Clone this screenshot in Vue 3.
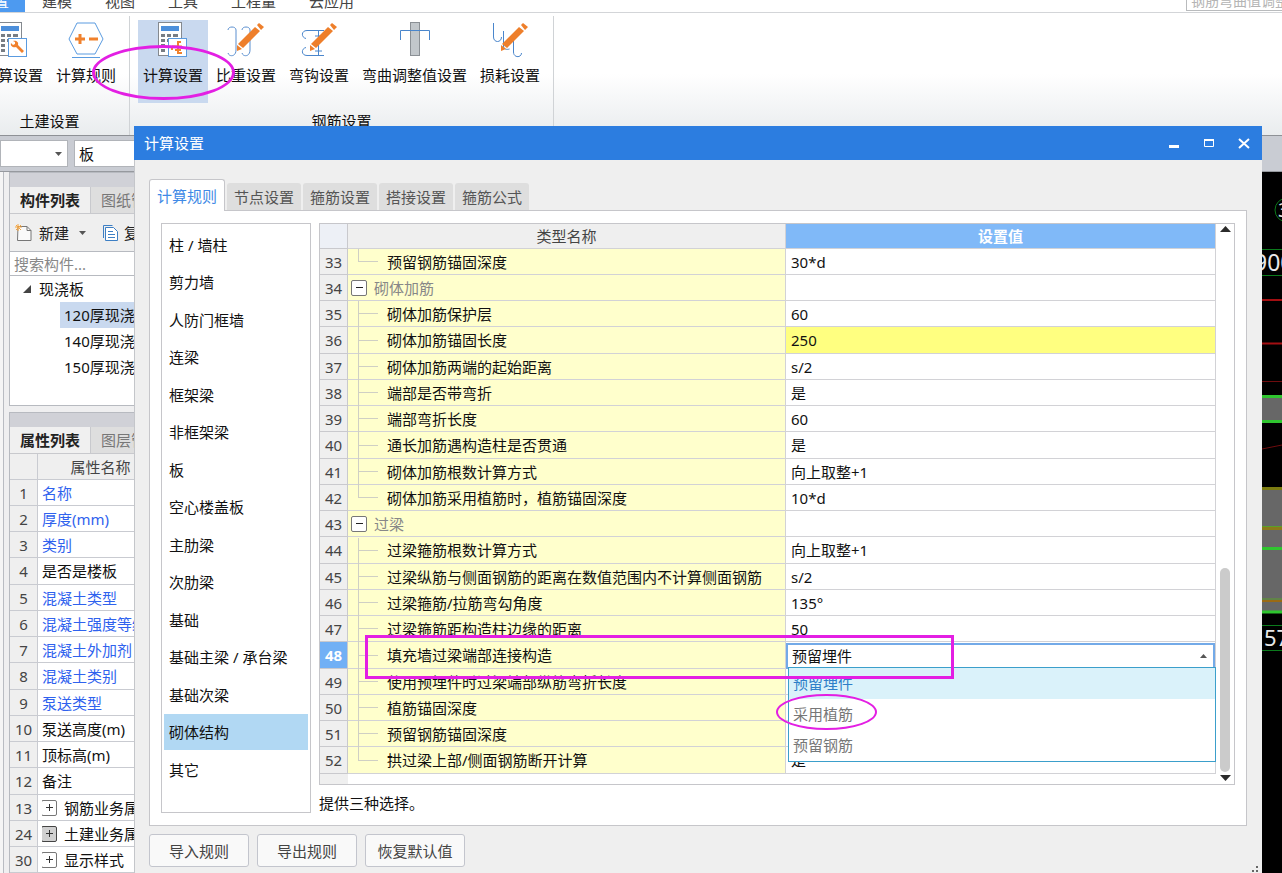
<script setup>
import { ref } from 'vue'

const menus = ['工程设置', '建模', '视图', '工具', '工程量', '云应用']

const groups = [
  {
    title: '土建设置',
    items: [
      { label: '计算设置', icon: 'calcWrench' },
      { label: '计算规则', icon: 'hexagon' },
    ],
  },
  {
    title: '钢筋设置',
    items: [
      { label: '计算设置', icon: 'calcRebar', active: true },
      { label: '比重设置', icon: 'weight' },
      { label: '弯钩设置', icon: 'hook' },
      { label: '弯曲调整值设置', icon: 'bend' },
      { label: '损耗设置', icon: 'loss' },
    ],
  },
]

const components = ['120厚现浇板', '140厚现浇板', '150厚现浇板']

const properties = [
  { no: 1, name: '名称', blue: true },
  { no: 2, name: '厚度(mm)', blue: true },
  { no: 3, name: '类别', blue: true },
  { no: 4, name: '是否是楼板' },
  { no: 5, name: '混凝土类型', blue: true },
  { no: 6, name: '混凝土强度等级', blue: true },
  { no: 7, name: '混凝土外加剂', blue: true },
  { no: 8, name: '混凝土类别', blue: true },
  { no: 9, name: '泵送类型', blue: true },
  { no: 10, name: '泵送高度(m)' },
  { no: 11, name: '顶标高(m)' },
  { no: 12, name: '备注' },
  { no: 13, name: '钢筋业务属性', group: true },
  { no: 24, name: '土建业务属性', group: true, dark: true },
  { no: 30, name: '显示样式', group: true },
]

const tabs = ['计算规则', '节点设置', '箍筋设置', '搭接设置', '箍筋公式']
const activeTab = ref('计算规则')

const categories = [
  '柱 / 墙柱', '剪力墙', '人防门框墙', '连梁', '框架梁', '非框架梁', '板', '空心楼盖板',
  '主肋梁', '次肋梁', '基础', '基础主梁 / 承台梁', '基础次梁', '砌体结构', '其它',
]
const activeCategory = ref('砌体结构')

const rules = [
  { no: 33, name: '预留钢筋锚固深度', value: '30*d', last: true },
  { no: 34, name: '砌体加筋', group: true },
  { no: 35, name: '砌体加筋保护层', value: '60' },
  { no: 36, name: '砌体加筋锚固长度', value: '250', changed: true },
  { no: 37, name: '砌体加筋两端的起始距离', value: 's/2' },
  { no: 38, name: '端部是否带弯折', value: '是' },
  { no: 39, name: '端部弯折长度', value: '60' },
  { no: 40, name: '通长加筋遇构造柱是否贯通', value: '是' },
  { no: 41, name: '砌体加筋根数计算方式', value: '向上取整+1' },
  { no: 42, name: '砌体加筋采用植筋时，植筋锚固深度', value: '10*d', last: true },
  { no: 43, name: '过梁', group: true },
  { no: 44, name: '过梁箍筋根数计算方式', value: '向上取整+1' },
  { no: 45, name: '过梁纵筋与侧面钢筋的距离在数值范围内不计算侧面钢筋', value: 's/2' },
  { no: 46, name: '过梁箍筋/拉筋弯勾角度', value: '135°' },
  { no: 47, name: '过梁箍筋距构造柱边缘的距离', value: '50' },
  { no: 48, name: '填充墙过梁端部连接构造', editing: true },
  { no: 49, name: '使用预埋件时过梁端部纵筋弯折长度', value: '' },
  { no: 50, name: '植筋锚固深度', value: '' },
  { no: 51, name: '预留钢筋锚固深度', value: '' },
  { no: 52, name: '拱过梁上部/侧面钢筋断开计算', value: '是', last: true },
]

const options = ['预留埋件', '采用植筋', '预留钢筋']
const selected = ref('预留埋件')
</script>

<template>
  <div class="app">
    <nav class="menu">
      <button v-for="(m, i) in menus" :key="m" type="button" :class="{ current: i === 0 }">{{ m }}</button>
      <input class="menu-search" type="text" aria-label="搜索" placeholder="钢筋弯曲值调整" />
    </nav>

    <header class="ribbon">
      <section v-for="g in groups" :key="g.title" class="group">
        <div class="tools">
          <button v-for="t in g.items" :key="t.icon" type="button" class="tool" :class="{ active: t.active }">
            <svg width="40" height="40" viewBox="0 0 40 40" fill="none" aria-hidden="true">
              <g v-if="t.icon === 'calcWrench' || t.icon === 'calcRebar'">
                <rect x="5.500" y="2.500" width="23" height="33" fill="#fff" stroke="#84898f" />
                <rect x="8" y="6" width="18" height="5" fill="#4c8fdb" />
                <path d="M8 15.500h4M14 15.500h4M20 15.500h5M8 20.500h4M14 20.500h4M8 25.500h4M8 30.500h4" stroke="#777d84" stroke-width="3" />
                <rect x="15.500" y="18.500" width="18" height="18" fill="#fff" stroke="#5a9be0" />
                <path v-if="t.icon === 'calcWrench'" d="M18 23l2 2 2-1 0-2-2-1c3-1 6 1 5 4l6 6-2 2-6-6c-3 1-6-1-5-4z" fill="#f0812d" />
                <path v-else d="M28 22h-3v11h4M19 26.500h10M19 26v4M22 30h6" stroke="#f0812d" stroke-width="2" />
              </g>
              <g v-else-if="t.icon === 'hexagon'">
                <path d="M11 3h18l8 16-8 15H11L3 19z" fill="#fff" stroke="#5a9be0" />
                <path d="M6 37.500h28" stroke="#5a9be0" />
                <path d="M9 19h10M14 14v10M23 19h9" stroke="#f0812d" stroke-width="3" />
              </g>
              <g v-else-if="t.icon === 'weight'" stroke="#5a8fd0">
                <path d="M2 10c0-4 8-4 8 0v20c0 7-7 7-8 3M16 10c0-4 8-4 8 0v20c0 7-7 7-8 3" />
              </g>
              <g v-else-if="t.icon === 'hook'" stroke="#4a86cc">
                <path d="M25 10.500H8c-6 0-6 7-1 8M25 35.500H8c-6 0-6-7-1-8M19.500 11v24M16 16h7M16 31h7" />
              </g>
              <g v-else-if="t.icon === 'bend'">
                <rect x="15.500" y="2.500" width="9" height="33" fill="#c2c7cb" stroke="#8b9095" />
                <path d="M5.500 20v-9.500h29V20" stroke="#4a86cc" />
              </g>
              <g v-else stroke="#4a86cc">
                <path d="M3.500 3v14c0 6 8 6 8 0M13.500 11v15c0 3 3 4 6 3M23.500 18v14c0 6 8 6 8 1" />
              </g>
              <path
                v-if="['weight', 'hook', 'loss'].includes(t.icon)"
                d="M31 5l2-2 5 4-3 3zM29 7l5 4-17 17-5-4zM11 25l5 4-5 2z"
                fill="#ee7f2b"
              />
            </svg>
            <span>{{ t.label }}</span>
          </button>
        </div>
        <h2>{{ g.title }}</h2>
      </section>
    </header>

    <div class="filters">
      <select class="floor" aria-label="楼层"><option></option></select>
      <svg class="floor-arrow" width="7" height="4" aria-hidden="true"><path d="M0 0h7L3.500 4z" fill="#555" /></svg>
      <select class="kind" aria-label="构件类型"><option>板</option></select>
    </div>

    <main class="workspace">
      <div class="rail"></div>
      <div class="side">
        <section class="panel tree-panel">
          <div class="band"></div>
          <div class="panel-tabs">
            <button type="button" class="on">构件列表</button>
            <button type="button">图纸管理</button>
          </div>
          <div class="panel-tools">
            <button type="button">
              <svg width="18" height="18" viewBox="0 0 18 18" fill="none" aria-hidden="true">
                <path d="M3 2.500h9l4 4v10H2.500z" fill="#fafafa" stroke="#777" />
                <path d="M12 2.500v4h4" stroke="#777" />
                <path d="M3 0v7M0 3h7M1 1l5 5M6 1L1 6" stroke="#f5a540" />
              </svg>
              新建
              <svg class="caret" width="7" height="4" aria-hidden="true"><path d="M0 0h7L3.500 4z" fill="#555" /></svg>
            </button>
            <button type="button">
              <svg width="16" height="18" viewBox="0 0 16 18" fill="none" aria-hidden="true">
                <path d="M1.500 14V1.500h9" stroke="#3d7fc4" />
                <path d="M3.500 3.500h8l4 4v9h-12z" fill="#fff" stroke="#3d7fc4" />
                <path d="M6 7.500h5M6 10.500h7M6 13.500h7" stroke="#3d7fc4" stroke-width="1" />
              </svg>
              复制
            </button>
          </div>
          <input class="find" type="text" aria-label="搜索构件" placeholder="搜索构件..." />
          <div class="tree">
            <div class="root">
              <svg width="8" height="8" aria-hidden="true"><path d="M8 0v8H0z" fill="#444" /></svg>
              现浇板
            </div>
            <ul>
              <li v-for="(c, i) in components" :key="c" :class="{ picked: i === 0 }">{{ c }}</li>
            </ul>
          </div>
        </section>

        <section class="panel">
          <div class="band"></div>
          <div class="panel-tabs">
            <button type="button" class="on">属性列表</button>
            <button type="button">图层管理</button>
          </div>
          <table class="props">
            <colgroup><col class="c-no" /><col class="c-prop" /><col /></colgroup>
            <thead>
              <tr><th></th><th>属性名称</th><th></th></tr>
            </thead>
            <tbody>
              <tr v-for="p in properties" :key="p.no">
                <th scope="row">{{ p.no }}</th>
                <td :class="{ blue: p.blue }">
                  <div class="prop">
                    <button v-if="p.group" type="button" class="box" :class="{ dark: p.dark }" aria-label="展开">
                      <svg width="7" height="7" aria-hidden="true"><path d="M0 3.500h7M3.500 0v7" stroke="#333" /></svg>
                    </button>
                    {{ p.name }}
                  </div>
                </td>
                <td></td>
              </tr>
            </tbody>
          </table>
        </section>
      </div>

      <div class="canvas">
        <svg width="20" height="701" viewBox="1262 172 20 701" fill="none" aria-hidden="true">
          <circle cx="1287" cy="210" r="12" stroke="#0b7a1c" />
          <text x="1278" y="217" class="cad" font-size="20">3</text>
          <path d="M1262 249.500h20M1262 275.500h20" stroke="#0b7a1c" />
          <text x="1254" y="271" class="cad" font-size="23">900</text>
          <path d="M1262 300h20M1262 343.500h20" stroke="#a30f12" stroke-width="2" />
          <path d="M1262 381.500h20" stroke="#6e0c0e" />
          <path d="M1262 449l20-4" stroke="#6e0c0e" />
          <path d="M1262 397h20v24h-20zM1262 488h20v125h-20z" fill="#676767" />
          <path d="M1262 396.500h20M1262 421.500h20M1262 548.500h20M1262 612h20" stroke="#2fc52f" stroke-width="3" />
          <path d="M1262 488.500h20" stroke="#7c7c12" stroke-width="3" />
          <path d="M1262 528.500h20" stroke="#8a7a1a" stroke-width="3" />
          <path d="M1262 526.500h20M1262 599h20" stroke="#5aa02a" />
          <path d="M1262 601h20" stroke="#9a6a14" stroke-width="2" />
          <path d="M1262 625.500h20M1262 650.500h20" stroke="#0b7a1c" />
          <text x="1264" y="646" class="cad" font-size="22">57</text>
        </svg>
      </div>
    </main>

    <section class="dialog" role="dialog" aria-labelledby="dialog-title">
      <header class="title">
        <h1 id="dialog-title">计算设置</h1>
        <button type="button" aria-label="最小化">
          <svg width="12" height="12" aria-hidden="true"><path d="M1 9.500h10" stroke="#fff" stroke-width="3" /></svg>
        </button>
        <button type="button" aria-label="最大化">
          <svg width="12" height="12" fill="none" aria-hidden="true">
            <path d="M1.500 2.500h9v7h-9z" stroke="#fff" /><path d="M1 3h10" stroke="#fff" stroke-width="2" />
          </svg>
        </button>
        <button type="button" aria-label="关闭">
          <svg width="12" height="12" aria-hidden="true"><path d="M1 2l10 9M11 2L1 11" stroke="#fff" stroke-width="2" /></svg>
        </button>
      </header>

      <div class="tabs" role="tablist">
        <button
          v-for="t in tabs"
          :key="t"
          type="button"
          role="tab"
          :aria-selected="t === activeTab"
          :class="{ on: t === activeTab }"
          @click="activeTab = t"
        >{{ t }}</button>
      </div>

      <div class="page">
        <ul class="cats">
          <li v-for="c in categories" :key="c">
            <button type="button" :class="{ on: c === activeCategory }" @click="activeCategory = c">{{ c }}</button>
          </li>
        </ul>

        <div class="content">
          <div class="grid-box">
            <div class="grid-main">
              <table class="rules">
                <colgroup><col class="c-no" /><col class="c-name" /><col /></colgroup>
                <thead>
                  <tr><th></th><th>类型名称</th><th class="hot">设置值</th></tr>
                </thead>
                <tbody>
                  <tr v-for="r in rules" :key="r.no" :class="{ grp: r.group, last: r.last, editing: r.editing }">
                    <th scope="row">{{ r.no }}</th>
                    <td class="name">
                      <div class="cell">
                        <button v-if="r.group" type="button" class="box" aria-label="折叠">
                          <svg width="7" height="7" aria-hidden="true"><path d="M0 3.500h7" stroke="#222" /></svg>
                        </button>
                        <span v-else class="branch"></span>
                        {{ r.name }}
                      </div>
                    </td>
                    <td class="value" :class="{ changed: r.changed }">
                      <div v-if="r.editing" class="combo">
                        <select v-model="selected" :aria-label="r.name">
                          <option v-for="o in options" :key="o">{{ o }}</option>
                        </select>
                        <svg width="7" height="4" aria-hidden="true"><path d="M0 4h7L3.500 0z" fill="#555" /></svg>
                        <ul class="popup" role="listbox">
                          <li
                            v-for="o in options"
                            :key="o"
                            role="option"
                            :aria-selected="o === selected"
                            :class="{ on: o === selected }"
                            @click="selected = o"
                          >{{ o }}</li>
                        </ul>
                      </div>
                      <template v-else>{{ r.value }}</template>
                    </td>
                  </tr>
                </tbody>
              </table>
              <div class="tail"></div>
            </div>
            <div class="scroll">
              <svg width="11" height="6" aria-hidden="true"><path d="M0 6h11L5.500 0z" fill="#2b2b2b" /></svg>
              <div class="track"><div class="thumb"></div></div>
              <svg width="11" height="6" aria-hidden="true"><path d="M0 0h11L5.500 6z" fill="#2b2b2b" /></svg>
            </div>
          </div>
          <p class="tip">提供三种选择。</p>
        </div>
      </div>

      <footer class="actions">
        <button type="button">导入规则</button>
        <button type="button">导出规则</button>
        <button type="button">恢复默认值</button>
        <svg class="grip" width="7" height="7" aria-hidden="true">
          <path d="M5 0h2v2H5zM5 4h2v2H5zM1 4h2v2H1z" fill="#666" />
        </svg>
      </footer>
    </section>

    <div class="mark ring-tool"></div>
    <div class="mark frame-row"></div>
    <div class="mark ring-option"></div>
  </div>
</template>

<style>
body {
  margin: 0;
}
</style>

<style scoped>
.app {
  position: relative;
  display: flex;
  flex-direction: column;
  height: 100vh;
  overflow: hidden;
  background: #efeff0;
  color: #111;
  font: 15px/20px "Noto Sans", "Noto Sans CJK SC", sans-serif;
}
.app * {
  box-sizing: border-box;
}
button,
input,
select {
  margin: 0;
  padding: 0;
  border: 0;
  background: none;
  color: inherit;
  font: inherit;
  white-space: nowrap;
}
select {
  appearance: none;
}
h1,
h2,
p,
ul {
  margin: 0;
  padding: 0;
  font: inherit;
  list-style: none;
}
svg {
  display: block;
  flex: none;
}
table {
  border-collapse: separate;
  border-spacing: 0;
  table-layout: fixed;
  width: 100%;
}
th,
td {
  padding: 0;
  font-weight: 400;
  line-height: 20px;
  white-space: nowrap;
}

.menu {
  display: flex;
  align-items: flex-end;
  gap: 1px;
  flex: none;
  height: 13px;
  overflow: hidden;
  background: #fff;
  border-bottom: 1px solid #d3d5d8;
  color: #444;
}
.menu button {
  flex: none;
  height: 22px;
  padding: 0 16px 1px;
}
.menu .current {
  margin-left: -67px;
  background: #4d9af0;
  color: #fff;
}
.menu-search {
  flex: none;
  width: 96px;
  height: 20px;
  margin: 0 0 1px auto;
  padding-left: 4px;
  border: 1px solid #b9bbbd;
  border-right: 0;
  font-size: 14px;
}
.menu-search::placeholder {
  color: #b4b4b4;
  opacity: 1;
}

.ribbon {
  display: flex;
  flex: none;
  height: 122px;
  background: linear-gradient(#fff 50%, #e9ecee);
}
.group {
  display: flex;
  flex-direction: column;
  justify-content: space-between;
  margin-top: 3px;
  padding: 4px 8px;
  border-right: 1px solid #d0d3d6;
}
.group:first-child {
  margin-left: -30px;
}
.group h2 {
  text-align: center;
}
.tools {
  display: flex;
  gap: 3px;
}
.tool {
  display: flex;
  flex-direction: column;
  align-items: center;
  gap: 5px;
  height: 83px;
  padding: 0 5px;
}
.tool.active {
  background: #c9d9ef;
}

.filters {
  display: flex;
  align-items: center;
  flex: none;
  height: 37px;
  background: #c9ccd3;
  border-top: 1px solid #8e9196;
  border-bottom: 1px solid #96999e;
}
.filters select {
  height: 27px;
  background: #fff;
  border: 1px solid #b1b4b9;
}
.floor {
  width: 68px;
}
.floor-arrow {
  margin: 0 12px 0 -13px;
}
.kind {
  width: 160px;
  padding-left: 4px;
}

.workspace {
  display: flex;
  flex: 1;
  min-height: 0;
}
.rail {
  flex: none;
  width: 4px;
  margin-right: 5px;
  background: #f5f5f5;
  border-right: 1px solid #b9bcc2;
}
.side {
  display: flex;
  flex-direction: column;
  gap: 6px;
  flex: none;
  width: 280px;
}
.panel {
  flex: none;
  border: 1px solid #b7bac0;
  background: #fff;
}
.band {
  height: 14px;
  background: #d0d1d7;
}
.panel-tabs {
  display: flex;
  height: 27px;
  background: #dedede;
  border-bottom: 1px solid #c8c9cd;
}
.panel-tabs button {
  padding: 0 10px;
  color: #777;
}
.panel-tabs .on {
  background: #f0f0f0;
  border-right: 1px solid #c8c9cd;
  color: #222;
  font-weight: 700;
}
.panel-tools {
  display: flex;
  gap: 16px;
  height: 37px;
  padding-left: 5px;
  background: #efefef;
}
.panel-tools button {
  display: flex;
  align-items: center;
  gap: 6px;
  color: #222;
}
.caret {
  margin-left: 4px;
}
.find {
  display: block;
  width: 100%;
  height: 25px;
  padding-left: 4px;
  border: solid #b7bac0;
  border-width: 1px 0;
}
.find::placeholder {
  color: #888;
  opacity: 1;
}
.tree {
  height: 129px;
}
.root {
  display: flex;
  align-items: center;
  gap: 8px;
  height: 26px;
  padding-left: 13px;
}
.tree li {
  height: 26px;
  margin-left: 50px;
  padding-left: 4px;
  line-height: 26px;
}
.tree .picked {
  background: #c9d9ef;
}

.c-no {
  width: 28px;
}
.c-prop {
  width: 126px;
}
.props th,
.props td {
  height: 26px;
  border: solid #c9cbd1;
  border-width: 0 1px 1px 0;
}
.props tr:nth-child(4n) > * {
  height: 27px;
}
.props th {
  background: #efefef;
  color: #444;
}
.props td {
  padding-left: 4px;
}
.props .blue {
  color: #2f62ee;
}
.prop {
  display: flex;
  align-items: center;
  gap: 7px;
  overflow: hidden;
}
.box {
  display: flex;
  align-items: center;
  justify-content: center;
  flex: none;
  width: 16px;
  height: 16px;
  margin-left: -1px;
  background: #fff;
  border: 1px solid #777;
  border-radius: 2px;
}
.box.dark {
  background: #d0d0d0;
  border-color: #444;
}

.canvas {
  display: flex;
  justify-content: flex-end;
  flex: 1;
  background: #000;
}
.cad {
  fill: #e8e8e8;
  font-family: "Noto Sans", sans-serif;
}

.dialog {
  position: absolute;
  top: 126px;
  right: 20px;
  bottom: 0;
  left: 134px;
  display: flex;
  flex-direction: column;
  background: #efefef;
  border: solid #c4c6ca;
  border-width: 0 0 0 1px;
}
.title {
  display: flex;
  align-items: center;
  gap: 23px;
  flex: none;
  height: 34px;
  margin-left: -1px;
  padding: 0 12px 0 10px;
  background: #2c7de0;
  color: #fff;
}
.title h1 {
  margin-right: auto;
}
.tabs {
  position: relative;
  display: flex;
  align-items: flex-end;
  gap: 2px;
  flex: none;
  height: 32px;
  margin: 19px 14px -1px;
}
.tabs button {
  height: 27px;
  margin-bottom: 1px;
  padding: 0 7px;
  background: #dedede;
  border-radius: 3px 3px 0 0;
  color: #555;
}
.tabs .on {
  height: 32px;
  margin-bottom: 0;
  padding: 0 7px;
  background: #fff;
  border: 1px solid #c6c6ca;
  border-bottom: 0;
  color: #3f8ae6;
}
.page {
  display: flex;
  gap: 8px;
  flex: none;
  margin: 0 15px 0 14px;
  padding: 12px 11px;
  background: #fff;
  border: 1px solid #c6c6ca;
}
.cats {
  flex: none;
  width: 150px;
  padding: 3px 2px 23px;
  border: 1px solid #c6c6ca;
}
.cats li {
  height: 37px;
}
.cats li:nth-child(2n) {
  height: 38px;
}
.cats button {
  width: 100%;
  height: 36px;
  padding-left: 5px;
  text-align: left;
}
.cats .on {
  background: #b1d8f3;
}
.content {
  flex: 1;
  min-width: 0;
}
.grid-box {
  display: flex;
  border: 1px solid #c6c6ca;
}
.grid-main {
  flex: 1;
  min-width: 0;
}
.c-name {
  width: 438px;
}
.rules th,
.rules td {
  height: 26px;
  border: solid #d2d2d6;
  border-width: 0 1px 1px 0;
}
.rules tbody tr:nth-child(4n) > * {
  height: 27px;
}
.rules thead th {
  height: 25px;
}
.rules th {
  background: #efefef;
  color: #444;
}
.rules th:first-child {
  border-color: #c9c9cd;
}
.rules thead th:first-child {
  background: #edf0f6;
}
.rules thead .hot {
  background: #80b9f8;
  color: #fff;
  font-weight: 700;
}
.rules .editing th {
  background: #71b0f5;
  color: #fff;
  font-weight: 700;
}
.rules .name {
  background: #ffffcc;
}
.cell {
  display: flex;
  align-items: center;
  height: 25px;
}
.grp .cell {
  gap: 7px;
  padding-left: 4px;
  color: #888;
}
.branch {
  position: relative;
  flex: none;
  align-self: stretch;
  width: 39px;
}
.branch::before {
  content: "";
  position: absolute;
  top: 0;
  bottom: -2px;
  left: 10px;
  border-left: 1px solid #cfcfc4;
}
.branch::after {
  content: "";
  position: absolute;
  top: 12px;
  left: 10px;
  width: 20px;
  border-top: 1px solid #cfcfc4;
}
.last .branch::before {
  bottom: 12px;
}
.rules .value {
  padding-left: 5px;
}
.rules .changed {
  background: #ffff80;
}
.rules .editing .value {
  padding: 0;
}
.combo {
  position: relative;
  display: flex;
  align-items: center;
  height: 26px;
  margin-bottom: -1px;
  background: #fff;
  border: 2px solid #73aae8;
}
.combo select {
  flex: 1;
  padding-left: 4px;
}
.combo svg {
  margin-right: 6px;
}
.popup {
  position: absolute;
  z-index: 1;
  top: 22px;
  right: -3px;
  left: 0;
  background: #fff;
  border: 1px solid #3b9fcb;
  color: #777;
}
.popup li {
  height: 31px;
  padding-left: 4px;
  line-height: 31px;
}
.popup .on {
  background: #daf2fa;
  color: #2f7fc8;
}
.tail {
  width: 28px;
  height: 10px;
  background: #efefef;
}
.scroll {
  display: flex;
  flex-direction: column;
  align-items: center;
  flex: none;
  width: 18px;
  padding: 2px 0 3px;
}
.track {
  display: flex;
  flex-direction: column;
  justify-content: flex-end;
  flex: 1;
  padding: 3px 0;
}
.thumb {
  width: 10px;
  height: 38%;
  background: #cbcbcb;
  border-radius: 5px;
}
.tip {
  margin-top: 8px;
}
.actions {
  position: relative;
  display: flex;
  gap: 8px;
  flex: 1;
  padding: 8px 14px 0;
  color: #444;
}
.actions button {
  width: 100px;
  height: 33px;
  background: #f9f9f9;
  border: 1px solid #c3c5cd;
  border-radius: 3px;
}
.grip {
  position: absolute;
  right: 4px;
  bottom: 0;
}

.mark {
  position: absolute;
  z-index: 2;
  border: 3px solid #e31fe3;
  pointer-events: none;
}
.ring-tool {
  top: 45px;
  left: 92px;
  width: 143px;
  height: 55px;
  border-radius: 50%;
}
.frame-row {
  top: 635px;
  left: 365px;
  width: 589px;
  height: 44px;
}
.ring-option {
  top: 694px;
  left: 776px;
  width: 101px;
  height: 36px;
  border-width: 2px;
  border-radius: 50%;
}
</style>
